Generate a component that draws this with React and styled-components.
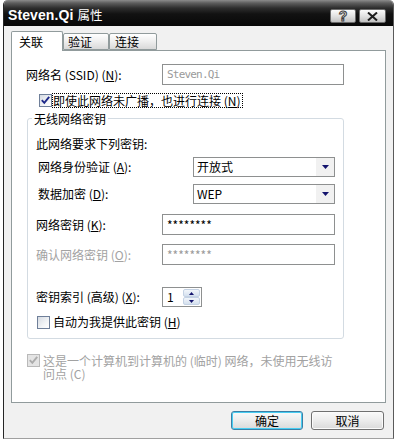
import React from 'react';
import styled, { createGlobalStyle } from 'styled-components';

const GlobalStyle = createGlobalStyle`
  html, body { margin: 0; padding: 0; background: #ffffff; }
  body {
    font-family: "Noto Sans CJK SC", "Noto Sans", sans-serif;
    font-size: 12px;
    color: #000;
  }
  * { box-sizing: border-box; }
`;

const Window = styled.div`
  width: 391px;
  height: 439px;
  margin-left: 3px;
  display: flex;
  flex-direction: column;
  background: #f1f1f1;
  border-left: 1px solid #262626;
  border-right: 1px solid #5a5a5a;
  border-bottom: 1px solid #a0a0a0;
  border-radius: 5px 5px 0 0;
  overflow: hidden;
`;

const TitleBar = styled.div`
  height: 26px;
  flex: none;
  display: flex;
  align-items: center;
  padding: 0 7px 0 4px;
  background: linear-gradient(to bottom, #8c8c8c 0px, #5e5e5e 3px, #2e2e2e 8px, #121212 14px, #080808 100%);
`;

const Title = styled.span`
  color: #fff;
  font-family: "Liberation Sans Narrow", "Liberation Sans", "Noto Sans CJK SC", sans-serif;
  font-size: 14px;
  font-weight: bold;
  margin-top: 2px;
  letter-spacing: 0.1px;
`;

const TitleCJK = styled.span`
  font-family: "Noto Sans CJK SC", sans-serif;
  font-size: 12.5px;
  font-weight: normal;
`;

const TitleButtons = styled.div`
  margin-left: auto;
  display: flex;
  gap: 3px;
  align-self: flex-end;
  margin-bottom: 3px;
`;

const TitleButton = styled.div`
  width: ${p => p.$w}px;
  height: 14px;
  border: 1px solid #6a6a6a;
  border-radius: 2px;
  background: linear-gradient(to bottom, #fbfbfb 0%, #e2e2e2 50%, #c2c2c2 100%);
  display: flex;
  align-items: center;
  justify-content: center;
`;

const HelpGlyph = styled.span`
  font-family: "Liberation Sans", sans-serif;
  font-weight: bold;
  font-size: 14px;
  line-height: 12px;
  color: #f4f4f4;
  -webkit-text-stroke: 1px #404040;
`;

const Body = styled.div`
  flex: 1;
  display: flex;
  flex-direction: column;
  padding: 5px 7px 0;
`;

const TabStrip = styled.div`
  display: flex;
  align-items: flex-end;
  height: 19px;
`;

const Tab = styled.div`
  position: relative;
  z-index: ${p => (p.$active ? 1 : 0)};
  width: ${p => p.$w}px;
  height: ${p => (p.$active ? 20 : 17)}px;
  margin-bottom: ${p => (p.$active ? -1 : 0)}px;
  padding-left: ${p => p.$pl}px;
  padding-top: ${p => (p.$active ? 0 : 1)}px;
  display: flex;
  align-items: center;
  border: 1px solid #919b9c;
  border-bottom: ${p => (p.$active ? 'none' : '1px solid #919b9c')};
  border-radius: 2px 2px 0 0;
  background: ${p => (p.$active ? '#ffffff' : 'linear-gradient(to bottom, #ffffff 0%, #f0f0f0 45%, #d9d9d9 100%)')};
  font-size: 12px;
  line-height: 14px;
`;

const Panel = styled.div`
  height: 353px;
  flex: none;
  background: #ffffff;
  border: 1px solid #919b9c;
  padding: 13px 0 0 14px;
  display: flex;
  flex-direction: column;
`;

const FormRow = styled.div`
  display: flex;
  align-items: center;
  height: ${p => p.$h}px;
  margin-top: ${p => p.$mt || 0}px;
`;

const FieldLabel = styled.span`
  flex: none;
  width: ${p => p.$w}px;
  padding-left: ${p => p.$pl || 0}px;
  color: ${p => (p.$muted ? '#a2a2a2' : '#000')};
  line-height: 14px;
  white-space: nowrap;
`;

const TextBox = styled.div`
  width: ${p => p.$w}px;
  height: 21px;
  border: 1px solid #8e9090;
  background: #fff;
  display: flex;
  align-items: center;
  padding-left: 4px;
  color: ${p => (p.$muted ? '#9a9a9a' : '#000')};
  font-family: ${p => (p.$mono ? '"DejaVu Sans Mono", "Liberation Mono", monospace' : '"Noto Sans CJK SC", sans-serif')};
  font-size: ${p => (p.$mono ? '11px' : '12px')};
  letter-spacing: ${p => (p.$mono ? '-0.8px' : '0')};
  line-height: 14px;
`;

const Select = styled.div`
  width: 142px;
  height: 20px;
  border: 1px solid #8e9090;
  background: #fff;
  display: flex;
  align-items: center;
  padding-left: 3px;
  line-height: 14px;
`;

const SelectArrow = styled.div`
  margin-left: auto;
  width: 18px;
  height: 18px;
  background: #f1f1f1;
  display: flex;
  align-items: center;
  justify-content: center;
`;

const CheckRow = styled.div`
  display: flex;
  align-items: ${p => (p.$top ? 'flex-start' : 'center')};
  margin-top: ${p => p.$mt || 0}px;
  margin-left: ${p => p.$ml || 0}px;
  gap: ${p => p.$gap || 0}px;
`;

const Box = styled.span`
  flex: none;
  width: 13px;
  height: 13px;
  margin-top: ${p => p.$mt || 0}px;
  border: 1px solid ${p => (p.$disabled ? '#b9b9b9' : '#6f7f99')};
  background: ${p => (p.$disabled ? '#e4e4e4' : 'linear-gradient(135deg, #d6dbe2 0%, #f2f4f6 60%, #ffffff 100%)')};
  display: flex;
  align-items: center;
  justify-content: center;
`;

const FocusLabel = styled.span`
  border: 1px dotted #000;
  padding: 0 1px 0 0;
  line-height: 13px;
  white-space: nowrap;
`;

const CheckText = styled.span`
  line-height: 14px;
  color: ${p => (p.$muted ? '#a2a2a2' : '#000')};
  white-space: nowrap;
`;

const WrapText = styled.div`
  display: flex;
  flex-direction: column;
  color: #a2a2a2;
  line-height: 13px;
  gap: 0;
`;

const WrapLine = styled.span`
  white-space: nowrap;
  line-height: 13px;
  height: 13px;
`;

const Group = styled.fieldset`
  margin: 3px 0 0 1px;
  width: 317px;
  padding: 11px 8px 9px 8px;
  border: 1px solid #d3dbe2;
  border-radius: 3px;
  min-width: 0;
`;

const Legend = styled.legend`
  margin-left: -4px;
  padding: 0 2px;
  line-height: 15px;
  font-size: 12px;
`;

const GroupText = styled.div`
  line-height: 14px;
`;

const Spin = styled.div`
  width: 40px;
  height: 20px;
  border: 1px solid #8e9090;
  background: #fff;
  display: flex;
  align-items: stretch;
  padding: 1px;
`;

const SpinValue = styled.span`
  flex: 1;
  padding-left: 3px;
  line-height: 16px;
`;

const SpinButtons = styled.div`
  width: 17px;
  display: flex;
  flex-direction: column;
`;

const SpinButton = styled.div`
  flex: 1;
  border: 1px solid #c4d2e4;
  border-radius: 2px;
  background: linear-gradient(to bottom, #f2f6fb, #d4e0ee);
  display: flex;
  align-items: center;
  justify-content: center;
`;

const Footer = styled.div`
  display: flex;
  justify-content: flex-end;
  gap: 8px;
  padding: 8px 2px 0 0;
`;

const Button = styled.div`
  width: ${p => p.$w}px;
  height: 19px;
  border: 1px solid ${p => (p.$default ? '#3b7fa6' : '#707070')};
  border-radius: 3px;
  box-shadow: inset 0 0 0 1px ${p => (p.$default ? '#48cdf2' : '#fbfbfb')};
  background: linear-gradient(to bottom, #fafafa 0%, #ececec 50%, #dadada 100%);
  display: flex;
  align-items: center;
  justify-content: center;
  line-height: 14px;
  font-size: 12px;
`;

const Arrow = ({ dir = 'down', color = '#14146e', w = 7, h = 4 }) => (
  <svg width={w} height={h} viewBox={`0 0 ${w} ${h}`}>
    {dir === 'down' ? (
      <polygon points={`0,0 ${w},0 ${w / 2},${h}`} fill={color} />
    ) : (
      <polygon points={`0,${h} ${w},${h} ${w / 2},0`} fill={color} />
    )}
  </svg>
);

const Check = ({ color }) => (
  <svg width="9" height="9" viewBox="0 0 9 9">
    <path d="M0.8 4.2 L3.3 6.8 L8.2 0.8" fill="none" stroke={color} strokeWidth="1.9" />
  </svg>
);

const CheckBox = ({ checked, disabled, mt }) => (
  <Box $disabled={disabled} $mt={mt}>
    {checked && <Check color={disabled ? '#acacac' : '#1f2a8a'} />}
  </Box>
);

export default function App() {
  return (
    <>
      <GlobalStyle />
      <Window>
        <TitleBar>
          <Title>
            Steven.Qi <TitleCJK>属性</TitleCJK>
          </Title>
          <TitleButtons>
            <TitleButton $w={26}>
              <HelpGlyph>?</HelpGlyph>
            </TitleButton>
            <TitleButton $w={27}>
              <svg width="11" height="9" viewBox="0 0 11 9">
                <path d="M1 0.5 L10 8.5 M10 0.5 L1 8.5" stroke="#1c1c1c" strokeWidth="2" />
              </svg>
            </TitleButton>
          </TitleButtons>
        </TitleBar>
        <Body>
          <TabStrip>
            <Tab $active $w={52} $pl={7}>关联</Tab>
            <Tab $w={46} $pl={4}>验证</Tab>
            <Tab $w={48} $pl={5}>连接</Tab>
          </TabStrip>
          <Panel>
            <FormRow $h={21}>
              <FieldLabel $w={136}>
                网络名 (SSID) (<u>N</u>):
              </FieldLabel>
              <TextBox $w={182} $muted $mono>Steven.Qi</TextBox>
            </FormRow>
            <CheckRow $mt={8} $ml={13}>
              <CheckBox checked />
              <FocusLabel>
                即使此网络未广播，也进行连接 (<u>N</u>)
              </FocusLabel>
            </CheckRow>
            <Group>
              <Legend>无线网络密钥</Legend>
              <GroupText>此网络要求下列密钥:</GroupText>
              <FormRow $h={20} $mt={6}>
                <FieldLabel $w={157} $pl={2}>
                  网络身份验证 (<u>A</u>):
                </FieldLabel>
                <Select>
                  开放式
                  <SelectArrow>
                    <Arrow />
                  </SelectArrow>
                </Select>
              </FormRow>
              <FormRow $h={20} $mt={7}>
                <FieldLabel $w={157} $pl={2}>
                  数据加密 (<u>D</u>):
                </FieldLabel>
                <Select>
                  WEP
                  <SelectArrow>
                    <Arrow />
                  </SelectArrow>
                </Select>
              </FormRow>
              <FormRow $h={21} $mt={10}>
                <FieldLabel $w={126}>
                  网络密钥 (<u>K</u>):
                </FieldLabel>
                <TextBox $w={173}>********</TextBox>
              </FormRow>
              <FormRow $h={21} $mt={9}>
                <FieldLabel $w={126} $muted>
                  确认网络密钥 (<u>O</u>):
                </FieldLabel>
                <TextBox $w={173} $muted>********</TextBox>
              </FormRow>
              <FormRow $h={20} $mt={22}>
                <FieldLabel $w={126}>
                  密钥索引 (高级) (<u>X</u>):
                </FieldLabel>
                <Spin>
                  <SpinValue>1</SpinValue>
                  <SpinButtons>
                    <SpinButton>
                      <Arrow dir="up" w={5} h={3} />
                    </SpinButton>
                    <SpinButton>
                      <Arrow w={5} h={3} />
                    </SpinButton>
                  </SpinButtons>
                </Spin>
              </FormRow>
              <CheckRow $mt={8} $ml={1} $gap={3}>
                <CheckBox />
                <CheckText>
                  自动为我提供此密钥 (<u>H</u>)
                </CheckText>
              </CheckRow>
            </Group>
            <CheckRow $mt={15} $ml={1} $gap={3} $top>
              <CheckBox checked disabled />
              <WrapText>
                <WrapLine>这是一个计算机到计算机的 (临时) 网络，未使用无线访</WrapLine>
                <WrapLine>问点 (C)</WrapLine>
              </WrapText>
            </CheckRow>
          </Panel>
          <Footer>
            <Button $w={72} $default>确定</Button>
            <Button $w={73}>取消</Button>
          </Footer>
        </Body>
      </Window>
    </>
  );
}
